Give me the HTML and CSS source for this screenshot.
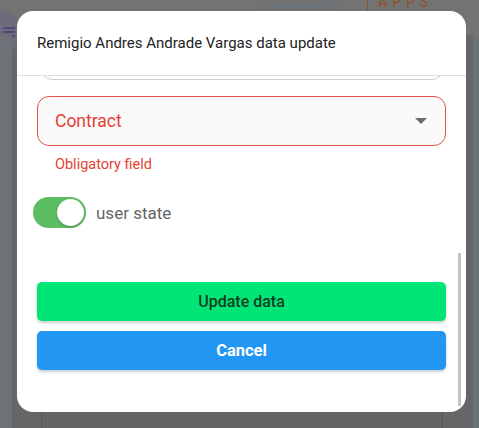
FILE: index.html
```html
<!DOCTYPE html>
<html>
<head>
<meta charset="utf-8">
<link rel="stylesheet" href="styles.css">
</head>
<body>
<div class="page">
  <div class="topbar">
    <div class="menu-btn">
      <svg width="14" height="14" viewBox="0 0 14 14"><path d="M1 3h12M1 7h12M1 11h12" stroke="#4a3f78" stroke-width="1.6"/></svg>
    </div>
    <div class="pill"></div>
    <div class="brand">APPS</div>
  </div>
  <div class="side side-left"></div>
  <div class="side side-right"></div>
  <div class="under-card"></div>
</div>

<div class="dialog">
  <div class="dialog-head">Remigio Andres Andrade Vargas data update</div>
  <div class="dialog-body">
    <div class="prev-field"></div>
    <div class="select">
      <span class="select-text">Contract</span>
      <span class="caret"></span>
    </div>
    <div class="helper">Obligatory field</div>
    <div class="switch-row">
      <div class="switch"><div class="thumb"></div></div>
      <span class="switch-label">user state</span>
    </div>
    <div class="actions">
      <button class="btn btn-update">Update data</button>
      <button class="btn btn-cancel">Cancel</button>
    </div>
  </div>
  <div class="scroll-thumb"></div>
</div>
</body>
</html>
```
FILE: styles.css
```css
* { box-sizing: border-box; }
html, body { margin: 0; padding: 0; }
body {
  width: 479px; height: 428px; overflow: hidden;
  font-family: Roboto, "Liberation Sans", sans-serif;
  background: #666666;
  position: relative;
}
.page { position: absolute; inset: 0; }
.topbar {
  position: absolute; left: 0; top: 0; right: 0; height: 35px;
  background: #737373;
}
.menu-btn {
  position: absolute; left: -22px; top: 10px; width: 44px; height: 44px;
  border-radius: 50%; background: #6e6b7a;
  display: flex; align-items: center; justify-content: flex-end; padding-right: 6px;
}
.pill {
  position: absolute; left: 250px; top: 4px; width: 96px; height: 40px;
  border-radius: 20px; background: #6e7378;
}
.brand {
  position: absolute; left: 367px; top: -6px; height: 18px;
  border-left: 1px solid #8a5430; padding-left: 10px;
  color: #8f5229; font-size: 14px; letter-spacing: 5px; line-height: 16px;
}
.side { position: absolute; top: 35px; bottom: 0; width: 12px; background: #6c7276; }
.side-left { left: 0; }
.side-right { right: 0; width: 6px; }
.under-card {
  position: absolute; left: 41px; top: 400px; width: 402px; height: 40px;
  border-left: 1px solid #555; border-right: 1px solid #555;
  background: #646464;
}

.dialog {
  position: absolute; left: 17px; top: 11px; width: 449px; height: 401px;
  background: #fff; border-radius: 16px; overflow: hidden;
  display: flex; flex-direction: column;
}
.dialog-head {
  height: 65px; padding: 22px 20px 0;
  font-size: 15px; color: #222; line-height: 20px;
  border-bottom: 1px solid #dedede;
}
.dialog-body {
  flex: 1; padding: 0 20px; overflow: hidden;
}
.prev-field {
  height: 40px; margin-top: -36px;
  border: 1px solid #cfcfcf; border-radius: 12px;
  margin-left: 3px; margin-right: 2px;
}
.select {
  margin-top: 16px; height: 50px;
  border: 1px solid #e0534a; border-radius: 12px;
  background: #fafafa;
  display: flex; align-items: center; justify-content: space-between;
  padding: 0 18px 0 17px;
}
.select-text { color: #e53f36; font-size: 17.5px; }
.caret {
  width: 0; height: 0;
  border-left: 6px solid transparent; border-right: 6px solid transparent;
  border-top: 6px solid #6b6b6b;
}
.helper {
  margin-top: 10px; padding-left: 18px;
  color: #e53f36; font-size: 14.5px; line-height: 18px;
}
.switch-row {
  margin-top: 23px; margin-left: -4px;
  display: flex; align-items: center; gap: 10px;
}
.switch {
  width: 53px; height: 31px; border-radius: 16px; background: #5cbd62;
  position: relative;
}
.thumb {
  position: absolute; right: 2px; top: 2px; width: 27px; height: 27px;
  border-radius: 50%; background: #fff;
  box-shadow: 0 1px 2px rgba(0,0,0,0.25);
}
.switch-label { color: #666; font-size: 17px; }
.actions {
  margin-top: 54px; display: flex; flex-direction: column; gap: 10px;
}
.btn {
  height: 39px; border: none; border-radius: 5px; width: 100%;
  font-family: Roboto, "Liberation Sans", sans-serif;
  box-shadow: 0 2px 3px rgba(0,0,0,0.2);
}
.btn-update { background: #00e676; color: #123d22; font-size: 16px; font-weight: 500; }
.btn-cancel { background: #2196f3; color: #fff; font-size: 16.5px; font-weight: 700; }
.scroll-thumb {
  position: absolute; left: 441px; top: 242px; width: 3px; height: 153px;
  background: #c2c2c2;
}
```
